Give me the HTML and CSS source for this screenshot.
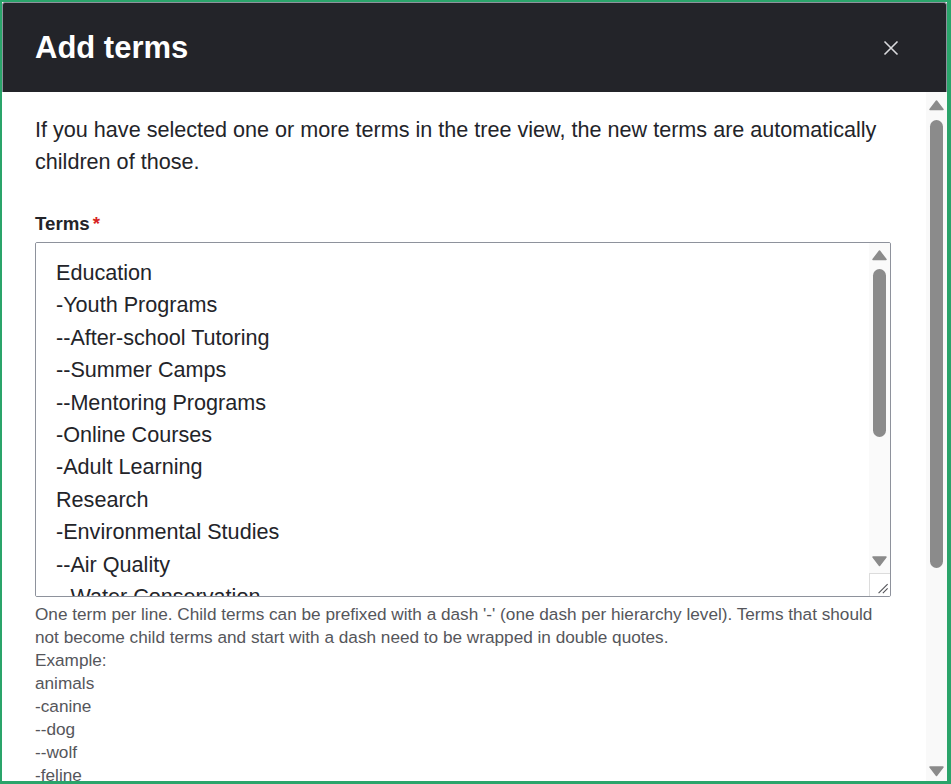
FILE: index.html
```html
<!DOCTYPE html>
<html lang="en">
<head>
<meta charset="utf-8">
<title>Add terms</title>
<link rel="stylesheet" href="styles.css">
</head>
<body>
<div class="dialog" role="dialog" aria-labelledby="dlg-title">
  <div class="dialog-header">
    <h1 id="dlg-title" class="dialog-title">Add terms</h1>
    <button class="close-btn" aria-label="Close">
      <svg width="16" height="16" viewBox="0 0 16 16"><path d="M1.5 1.5 L14.5 14.5 M14.5 1.5 L1.5 14.5" stroke="#d9d9dc" stroke-width="1.6" fill="none"/></svg>
    </button>
  </div>
  <div class="dialog-main">
    <div class="dialog-body">
      <p class="intro">If you have selected one or more terms in the tree view, the new terms are automatically children of those.</p>
      <div class="form-item">
        <label class="form-label" for="terms">Terms<span class="required">*</span></label>
        <div class="textarea-box">
          <textarea id="terms" class="form-textarea" rows="10">Education
-Youth Programs
--After-school Tutoring
--Summer Camps
--Mentoring Programs
-Online Courses
-Adult Learning
Research
-Environmental Studies
--Air Quality
--Water Conservation
-Health Sciences
--Public Health
--Nutrition
Community
-Volunteer Programs
-Events
--Fundraisers</textarea>
          <div class="scrollbar scrollbar-inner">
            <div class="sb-btn"><svg width="21" height="21" viewBox="0 0 21 21"><path d="M4 16.5 L10.5 8 L17 16.5 Z" fill="#8b8b8b" stroke="#8b8b8b" stroke-width="1.5" stroke-linejoin="round"/></svg></div>
            <div class="sb-track sb-track-inner"><div class="sb-thumb sb-thumb-inner"></div></div>
            <div class="sb-btn"><svg width="21" height="21" viewBox="0 0 21 21"><path d="M4 5 L10.5 13.5 L17 5 Z" fill="#8b8b8b" stroke="#8b8b8b" stroke-width="1.5" stroke-linejoin="round"/></svg></div>
            <div class="sb-corner"><svg width="21" height="22" viewBox="0 0 21 22"><path d="M9 19.5 L18.5 10 M13.5 19.5 L18.5 14.5" stroke="#55565b" stroke-width="1.2" fill="none"/></svg></div>
          </div>
        </div>
        <div class="description">One term per line. Child terms can be prefixed with a dash '-' (one dash per hierarchy level). Terms that should not become child terms and start with a dash need to be wrapped in double quotes.<br>Example:<br>animals<br>-canine<br>--dog<br>--wolf<br>-feline<br>--cat</div>
      </div>
    </div>
    <div class="scrollbar scrollbar-page">
      <div class="sb-btn"><svg width="21" height="21" viewBox="0 0 21 21"><path d="M4 17.5 L10.5 9 L17 17.5 Z" fill="#8b8b8b" stroke="#8b8b8b" stroke-width="1.5" stroke-linejoin="round"/></svg></div>
      <div class="sb-track sb-track-page"><div class="sb-thumb sb-thumb-page"></div></div>
      <div class="sb-btn sb-btn-end"><svg width="21" height="21" viewBox="0 0 21 21"><path d="M4 3 L10.5 11.5 L17 3 Z" fill="#8b8b8b" stroke="#8b8b8b" stroke-width="1.5" stroke-linejoin="round"/></svg></div>
    </div>
  </div>
</div>
</body>
</html>
```

FILE: styles.css
```css
* { box-sizing: border-box; }
html, body {
  margin: 0;
  padding: 0;
  height: 100%;
  background: #fff;
  overflow: hidden;
}
body {
  font-family: "Liberation Sans", Arial, sans-serif;
  color: #232429;
}
.dialog {
  height: 784px;
  width: 951px;
  border: 2px solid #2aa46a;
  border-right-width: 4px;
  border-bottom-width: 3px;
  display: flex;
  flex-direction: column;
  background: #fff;
}
.dialog-header {
  height: 90px;
  flex: none;
  background: #232429;
  border-radius: 3px 3px 0 0;
  border: 1px solid #8e929c;
  border-bottom: none;
  display: flex;
  align-items: center;
  justify-content: space-between;
  padding: 0 47px 0 32px;
}
.dialog-title {
  margin: 0;
  color: #fff;
  font-size: 31px;
  font-weight: 700;
  line-height: 1;
  padding-bottom: 1px;
}
.close-btn {
  background: none;
  border: 0;
  padding: 0;
  width: 16px;
  height: 16px;
  display: flex;
  cursor: pointer;
}
.dialog-main {
  flex: 1;
  min-height: 0;
  display: flex;
}
.dialog-body {
  flex: 1;
  min-width: 0;
  overflow: hidden;
  padding: 22px 35px 0 33px;
}
.intro {
  margin: 0 0 34px;
  font-size: 21.6px;
  line-height: 32px;
  color: #232429;
}
.form-label {
  display: block;
  font-size: 18.7px;
  font-weight: 700;
  line-height: 24px;
  color: #232429;
  margin-bottom: 6px;
}
.required {
  color: #d72222;
  margin-left: 3px;
}
.textarea-box {
  display: flex;
  height: 355px;
  border: 1px solid #8e929c;
  border-radius: 2px;
  overflow: hidden;
}
.form-textarea {
  flex: 1;
  min-width: 0;
  display: block;
  height: 100%;
  margin: 0;
  padding: 14px 20px;
  border: 0;
  outline: none;
  overflow: hidden;
  font-family: "Liberation Sans", Arial, sans-serif;
  font-size: 21.6px;
  line-height: 32.4px;
  color: #232429;
  resize: none;
  background: #fff;
}
.description {
  margin-top: 6px;
  font-size: 17.2px;
  line-height: 23px;
  color: #55565b;
}

/* Fake scrollbars */
.scrollbar {
  width: 21px;
  flex: none;
  display: flex;
  flex-direction: column;
}
.scrollbar-page { background: #f9f9f9; }
.scrollbar-inner { background: #fafafa; }
.sb-btn {
  height: 21px;
  flex: none;
  display: flex;
}
.sb-track {
  flex: 1;
  min-height: 0;
}
.sb-thumb {
  width: 13px;
  margin: 0 4px;
  background: #8b8b8b;
  border-radius: 7px;
}
.sb-track-page { padding-top: 7px; }
.sb-thumb-page { height: 448px; }
.sb-btn-end { margin-bottom: -4px; }
.sb-track-inner { padding-top: 5px; }
.sb-thumb-inner { height: 168px; }
.sb-corner {
  height: 23px;
  flex: none;
  background: #fff;
  border-top: 1px solid #dcdcdc;
  border-left: 1px solid #dcdcdc;
  display: flex;
  align-items: flex-end;
}
```
